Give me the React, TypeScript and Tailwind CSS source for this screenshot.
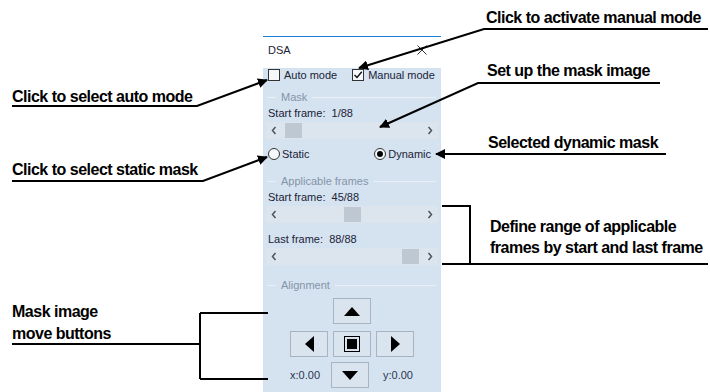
import React from "react";

const panelFont = { fontFamily: '"Liberation Sans", Arial, sans-serif' };
const noteFont = { fontFamily: '"Liberation Sans Narrow", "Arial Narrow", "Liberation Sans", sans-serif' };

function CheckBox({ checked, label }: { checked?: boolean; label: string }) {
  return (
    <div className="flex items-center gap-[4px]">
      <div className="w-[12px] h-[12px] border border-[#333] bg-[#f6f9fc] flex items-center justify-center">
        {checked && (
          <svg width="10" height="10" viewBox="0 0 10 10">
            <path d="M1.5 5 L4 7.5 L8.8 1.8" fill="none" stroke="#111" strokeWidth="1.4" />
          </svg>
        )}
      </div>
      <span>{label}</span>
    </div>
  );
}

function Radio({ checked, label }: { checked?: boolean; label: string }) {
  return (
    <div className="flex items-center gap-[2px]">
      <div className="w-[12px] h-[12px] rounded-full border border-[#333] bg-[#f6f9fc] flex items-center justify-center">
        {checked && <div className="w-[6px] h-[6px] rounded-full bg-black" />}
      </div>
      <span>{label}</span>
    </div>
  );
}

function Group({ title, className }: { title: string; className: string }) {
  return (
    <div className={`flex items-center h-[14px] pl-[1px] pr-[2px] ${className}`}>
      <div className="w-[9px] h-px bg-[#eaf0f6]" />
      <span className="px-[5px] text-[#8593a7]">{title}</span>
      <div className="flex-1 h-px bg-[#eaf0f6]" />
    </div>
  );
}

function Chevron({ dir }: { dir: "l" | "r" }) {
  return (
    <svg width="6" height="9" viewBox="0 0 6 9">
      <path d={dir === "l" ? "M4.5 1 L1.5 4.5 L4.5 8" : "M1.5 1 L4.5 4.5 L1.5 8"} fill="none" stroke="#4a5460" strokeWidth="1.5" />
    </svg>
  );
}

function Track({ value, className }: { value: number; className: string }) {
  const left = 19 + ((value - 1) / 87) * 117;
  return (
    <div className={`relative h-[17px] bg-[#dce5ee] flex items-center justify-between px-[5px] ${className}`}>
      <Chevron dir="l" />
      <Chevron dir="r" />
      <div className="absolute top-[1px] w-[17px] h-[15px] bg-[#bec8d2]" style={{ left }} />
    </div>
  );
}

function Btn({ children }: { children: React.ReactNode }) {
  return (
    <div className="w-[38px] h-[26px] border border-[#a8b4c2] bg-[#d9e4ef] flex items-center justify-center">
      {children}
    </div>
  );
}

const Notes = [
  { text: "Click to activate manual mode", cls: "left-[486px] top-[9px]" },
  { text: "Set up the mask image", cls: "left-[487px] top-[62px]" },
  { text: "Selected dynamic mask", cls: "left-[488px] top-[134px]" },
  { text: "Click to select auto mode", cls: "left-[12px] top-[88px]" },
  { text: "Click to select static mask", cls: "left-[12px] top-[161px]" },
];

export default function App() {
  return (
    <div className="relative w-[710px] h-[392px] bg-white overflow-hidden">
      {/* DSA panel */}
      <div className="ml-[263px] pt-[36px] w-[178px] text-[11px] leading-[14px] text-[#1b2236]" style={panelFont}>
        <div className="h-[26px] border-t border-[#1a7fd4] bg-white flex items-center justify-between pl-[5px] pr-[14px]">
          <span>DSA</span>
          <svg width="10" height="10" viewBox="0 0 10 10">
            <path d="M0.5 0.5 L9.5 9.5 M9.5 0.5 L0.5 9.5" stroke="#333" strokeWidth="1" />
          </svg>
        </div>
        <div className="bg-[#d5e3f1] px-[3px] pb-[10px]">
          <div className="flex items-center h-[14px] pt-0 mt-[6px] pl-[2px] gap-[15px]">
            <CheckBox label="Auto mode" />
            <CheckBox checked label="Manual mode" />
          </div>
          <Group title="Mask" className="mt-[8px]" />
          <div className="h-[14px] mt-[2px] pl-[2px]">Start frame:&nbsp;&nbsp;1/88</div>
          <Track value={1} className="mt-[2px]" />
          <div className="flex items-center justify-between h-[14px] mt-[8px] pl-[2px] pr-[5px]">
            <Radio label="Static" />
            <div className="mr-[2px]">
              <Radio checked label="Dynamic" />
            </div>
          </div>
          <Group title="Applicable frames" className="mt-[13px]" />
          <div className="h-[14px] mt-[2px] pl-[2px]">Start frame:&nbsp;&nbsp;45/88</div>
          <Track value={45} className="mt-[2px]" />
          <div className="h-[14px] mt-[9px] pl-[2px]">Last frame:&nbsp;&nbsp;88/88</div>
          <Track value={88} className="mt-[2px]" />
          <Group title="Alignment" className="mt-[13px]" />
          <div className="flex flex-col items-center mt-[6px]">
            <Btn>
              <svg width="16" height="9" viewBox="0 0 16 9"><path d="M8 0 L16 9 L0 9 Z" fill="#000" /></svg>
            </Btn>
            <div className="flex gap-[5px] mt-[7px]">
              <Btn>
                <svg width="9" height="16" viewBox="0 0 9 16"><path d="M0 8 L9 0 L9 16 Z" fill="#000" /></svg>
              </Btn>
              <Btn>
                <svg width="16" height="16" viewBox="0 0 16 16">
                  <rect x="0.5" y="0.5" width="15" height="15" fill="none" stroke="#000" strokeWidth="1" />
                  <rect x="3" y="3" width="10" height="10" fill="#000" />
                </svg>
              </Btn>
              <Btn>
                <svg width="9" height="16" viewBox="0 0 9 16"><path d="M9 8 L0 0 L0 16 Z" fill="#000" /></svg>
              </Btn>
            </div>
            <div className="flex items-center mt-[5px]">
              <span className="w-[44px] pr-[11px] text-right text-[#2a3550]">x:0.00</span>
              <Btn>
                <svg width="16" height="9" viewBox="0 0 16 9"><path d="M8 9 L16 0 L0 0 Z" fill="#000" /></svg>
              </Btn>
              <span className="w-[48px] pl-[14px] text-[#2a3550]">y:0.00</span>
            </div>
          </div>
        </div>
      </div>

      {/* annotations */}
      <div className="text-[16px] leading-[18px] font-bold tracking-[-0.5px] text-black" style={noteFont}>
        {Notes.map((n) => (
          <div key={n.text} className={`absolute whitespace-nowrap ${n.cls}`}>
            {n.text}
          </div>
        ))}
        <div className="absolute left-[490px] top-[216px] leading-[21px] whitespace-nowrap">
          Define range of applicable
          <br />
          frames by start and last frame
        </div>
        <div className="absolute left-[12px] top-[301px] leading-[22px] whitespace-nowrap">
          Mask image
          <br />
          move buttons
        </div>
      </div>

      <svg className="absolute inset-0 pointer-events-none" width="710" height="392" viewBox="0 0 710 392">
        <defs>
          <marker id="ah" viewBox="0 0 10 10" refX="9" refY="5" markerWidth="5" markerHeight="5" orient="auto">
            <path d="M0 0 L10 5 L0 10 Z" fill="#000" />
          </marker>
        </defs>
        <g fill="none" stroke="#000" strokeWidth="2">
          <path d="M708 29 H484 L359 68" markerEnd="url(#ah)" />
          <path d="M12 106 H197 L267 80" markerEnd="url(#ah)" />
          <path d="M660 83 H478 L380 127" markerEnd="url(#ah)" />
          <path d="M666 154 H436" markerEnd="url(#ah)" />
          <path d="M12 181 H203 L267 157" markerEnd="url(#ah)" />
          <path d="M442 206 H470 V264 M442 264 H708" />
          <path d="M12 344 H200 M200 313 V379 M200 313 H268 M200 379 H268" />
        </g>
      </svg>
    </div>
  );
}
